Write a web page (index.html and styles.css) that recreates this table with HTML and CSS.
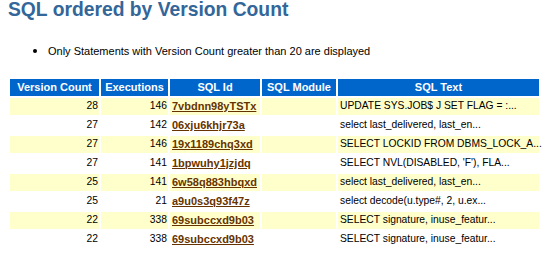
FILE: index.html
```html
<!DOCTYPE html>
<html lang="en">
<head>
    <meta charset="UTF-8">
    <title>SQL ordered by Version Count</title>
    <link rel="stylesheet" href="styles.css">
</head>
<body>
    <h1 class="awr">SQL ordered by Version Count</h1>
    <ul>
        <li class="awr">Only Statements with Version Count greater than 20 are displayed</li>
    </ul>
    <table class="awr">
        <tr>
            <th class="c-count">Version Count</th>
            <th class="c-exec">Executions</th>
            <th class="c-id">SQL Id</th>
            <th class="c-mod">SQL Module</th>
            <th class="c-text">SQL Text</th>
        </tr>
        <tr class="awrc">
            <td class="num">28</td>
            <td class="num">146</td>
            <td><a class="awr" href="#7vbdnn98yTSTx">7vbdnn98yTSTx</a></td>
            <td></td>
            <td>UPDATE SYS.JOB$ J SET FLAG = :...</td>
        </tr>
        <tr class="awrnc">
            <td class="num">27</td>
            <td class="num">142</td>
            <td><a class="awr" href="#06xju6khjr73a">06xju6khjr73a</a></td>
            <td></td>
            <td>select last_delivered, last_en...</td>
        </tr>
        <tr class="awrc">
            <td class="num">27</td>
            <td class="num">146</td>
            <td><a class="awr" href="#19x1189chq3xd">19x1189chq3xd</a></td>
            <td></td>
            <td>SELECT LOCKID FROM DBMS_LOCK_A...</td>
        </tr>
        <tr class="awrnc">
            <td class="num">27</td>
            <td class="num">141</td>
            <td><a class="awr" href="#1bpwuhy1jzjdq">1bpwuhy1jzjdq</a></td>
            <td></td>
            <td>SELECT NVL(DISABLED, 'F'), FLA...</td>
        </tr>
        <tr class="awrc">
            <td class="num">25</td>
            <td class="num">141</td>
            <td><a class="awr" href="#6w58q883hbqxd">6w58q883hbqxd</a></td>
            <td></td>
            <td>select last_delivered, last_en...</td>
        </tr>
        <tr class="awrnc">
            <td class="num">25</td>
            <td class="num">21</td>
            <td><a class="awr" href="#a9u0s3q93f47z">a9u0s3q93f47z</a></td>
            <td></td>
            <td>select decode(u.type#, 2, u.ex...</td>
        </tr>
        <tr class="awrc">
            <td class="num">22</td>
            <td class="num">338</td>
            <td><a class="awr" href="#69subccxd9b03">69subccxd9b03</a></td>
            <td></td>
            <td>SELECT signature, inuse_featur...</td>
        </tr>
        <tr class="awrnc">
            <td class="num">22</td>
            <td class="num">338</td>
            <td><a class="awr" href="#69subccxd9b03">69subccxd9b03</a></td>
            <td></td>
            <td>SELECT signature, inuse_featur...</td>
        </tr>
    </table>
</body>
</html>
```

FILE: styles.css
```css
body {
    font-family: Arial, "Liberation Sans", Helvetica, sans-serif;
    background: #fff;
    color: #000;
    margin: 0 8px;
}
h1.awr {
    font-size: 19.3px;
    font-weight: bold;
    line-height: 20px;
    color: #336699;
    margin: 0;
    padding: 0;
}
ul {
    margin: 24px 0 19px 0;
    padding-left: 40px;
}
li.awr {
    font-size: 11px;
    line-height: 13px;
}
li.awr::marker {
    font-size: 13px;
}
table.awr {
    width: 533px;
    border-collapse: separate;
    border-spacing: 2px;
    table-layout: fixed;
}
table.awr th {
    font-size: 11px;
    font-weight: bold;
    line-height: 15px;
    color: #fff;
    background: #0066cc;
    padding: 1px 4px;
    text-align: center;
    white-space: nowrap;
    overflow: hidden;
}
table.awr td {
    font-size: 10.3px;
    line-height: 14px;
    padding: 1px 1px 1px 2px;
    vertical-align: top;
    white-space: nowrap;
}
tr.awrc td {
    background: #ffffcc;
}
tr.awrnc td {
    background: #fff;
}
td.num {
    font-size: 11px;
    text-align: right;
}
a.awr {
    font-size: 11px;
    font-weight: bold;
    color: #663300;
}
.c-count { width: 81px; }
.c-exec { width: 59px; }
.c-id { width: 82px; }
.c-mod { width: 66px; }
.c-text { width: 193px; }
```
